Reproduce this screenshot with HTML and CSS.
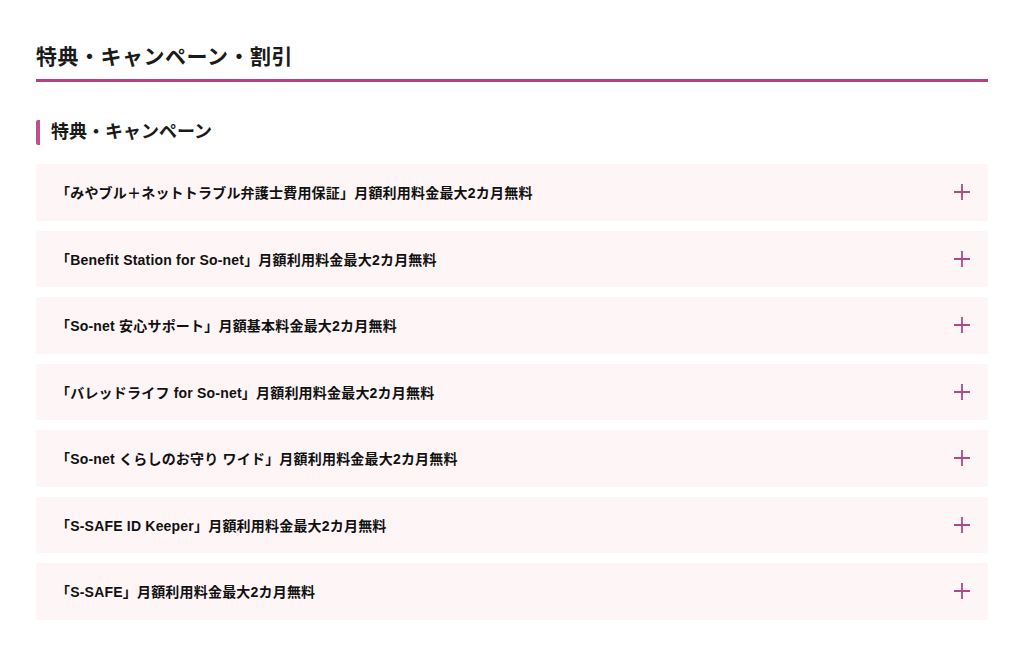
FILE: index.html
```html
<!DOCTYPE html>
<html lang="ja">
<head>
<meta charset="utf-8">
<link rel="stylesheet" href="styles.css">
</head>
<body>
<main class="page">
  <h1 class="title">特典・キャンペーン・割引</h1>
  <h2 class="subtitle">特典・キャンペーン</h2>
  <ul class="list">
    <li class="item"><span class="label">「みやブル＋ネットトラブル弁護士費用保証」月額利用料金最大2カ月無料</span><svg class="plus" viewBox="0 0 18 18"><path d="M9 1v16M1 9h16"/></svg></li>
    <li class="item"><span class="label">「Benefit Station for So-net」月額利用料金最大2カ月無料</span><svg class="plus" viewBox="0 0 18 18"><path d="M9 1v16M1 9h16"/></svg></li>
    <li class="item"><span class="label">「So-net 安心サポート」月額基本料金最大2カ月無料</span><svg class="plus" viewBox="0 0 18 18"><path d="M9 1v16M1 9h16"/></svg></li>
    <li class="item"><span class="label">「バレッドライフ for So-net」月額利用料金最大2カ月無料</span><svg class="plus" viewBox="0 0 18 18"><path d="M9 1v16M1 9h16"/></svg></li>
    <li class="item"><span class="label">「So-net くらしのお守り ワイド」月額利用料金最大2カ月無料</span><svg class="plus" viewBox="0 0 18 18"><path d="M9 1v16M1 9h16"/></svg></li>
    <li class="item"><span class="label">「S-SAFE ID Keeper」月額利用料金最大2カ月無料</span><svg class="plus" viewBox="0 0 18 18"><path d="M9 1v16M1 9h16"/></svg></li>
    <li class="item"><span class="label">「S-SAFE」月額利用料金最大2カ月無料</span><svg class="plus" viewBox="0 0 18 18"><path d="M9 1v16M1 9h16"/></svg></li>
  </ul>
</main>
</body>
</html>
```
FILE: styles.css
```css
html, body {
  margin: 0;
  padding: 0;
  background: #ffffff;
}
body {
  font-family: "Liberation Sans", Arial, "Noto Sans CJK JP", sans-serif;
  color: #1a1a1a;
}
.page {
  padding: 40px 36px 0 36px;
}
.title {
  margin: 0;
  font-size: 21px;
  font-weight: bold;
  line-height: 34px;
  padding-bottom: 5px;
  border-bottom: 3px solid #b5407f;
  letter-spacing: 0.5px;
}
.subtitle {
  margin: 38px 0 0 0;
  font-size: 18px;
  font-weight: bold;
  line-height: 25px;
  padding-left: 11px;
  border-left: 4px solid #c04f8a;
  border-radius: 2px;
}
.list {
  list-style: none;
  margin: 19px 0 0 0;
  padding: 0;
  display: flex;
  flex-direction: column;
  gap: 10px;
}
.item {
  display: flex;
  align-items: center;
  justify-content: space-between;
  height: 56.5px;
  background: #fdf5f6;
  border-radius: 3px;
  padding: 0 17px 0 20px;
}
.label {
  font-size: 14px;
  font-weight: bold;
  color: #111;
  letter-spacing: 0.2px;
}
.plus {
  width: 18px;
  height: 18px;
  fill: none;
  stroke: #b04a86;
  stroke-width: 1.8;
}
```
